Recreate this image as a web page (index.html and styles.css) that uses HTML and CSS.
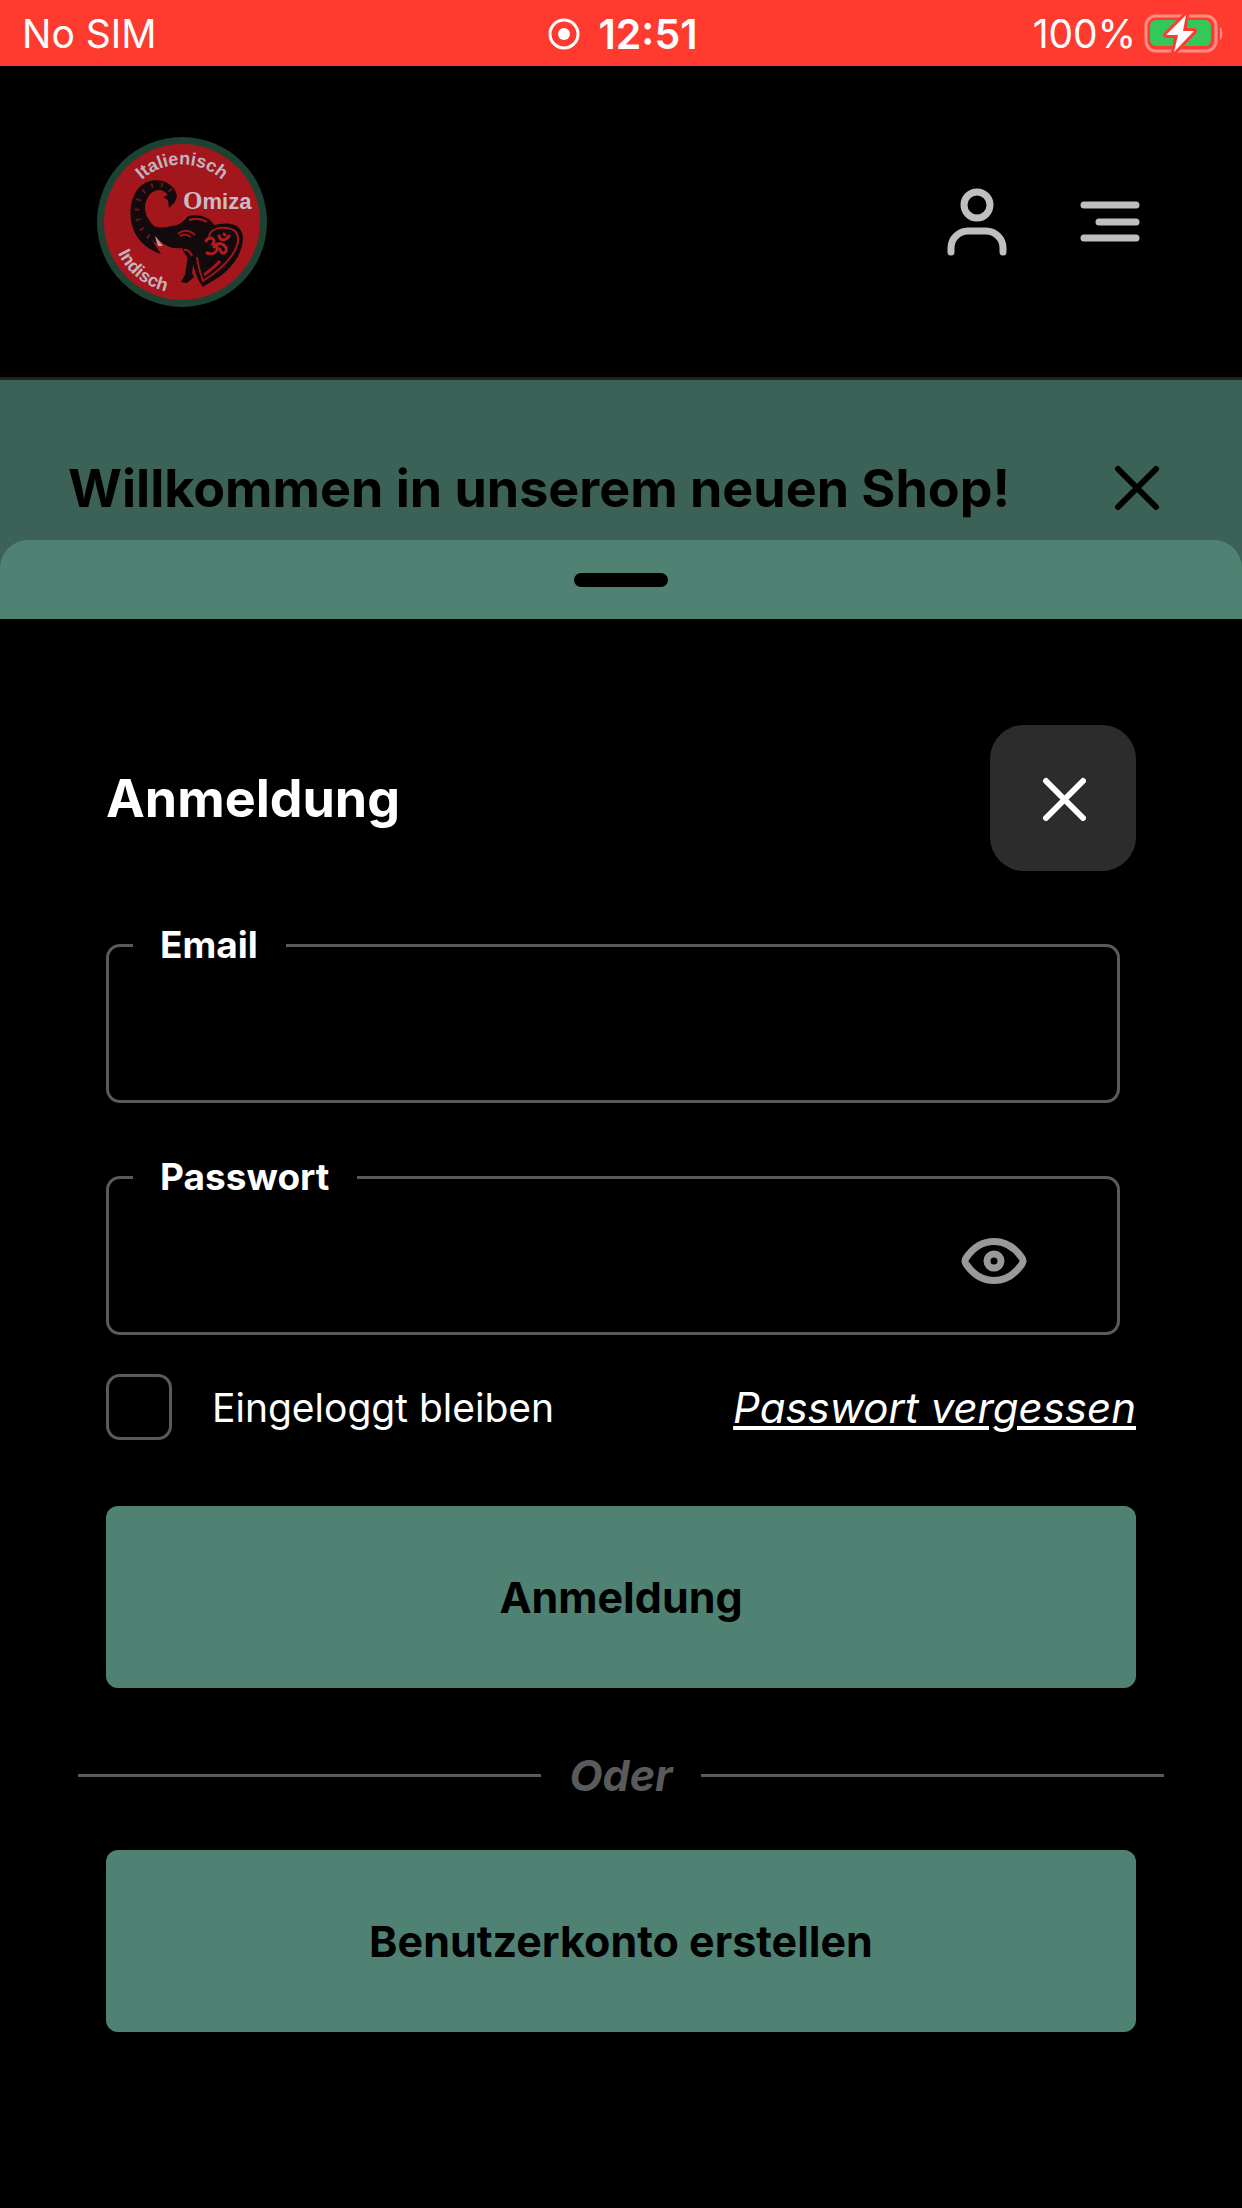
FILE: index.html
```html
<!DOCTYPE html>
<html lang="de">
<head>
    <meta charset="UTF-8" />
    <meta name="viewport" content="width=device-width, initial-scale=1.0"/>
    <title>Omiza - Anmeldung</title>
    <link rel="stylesheet" href="styles.css">
</head>
<body>
    <div class="status-bar">
        <span class="carrier">No SIM</span>
        <div class="clock">
            <svg width="32" height="32" viewBox="0 0 32 32">
                <circle cx="16" cy="16" r="14" fill="none" stroke="#fff" stroke-width="3"/>
                <circle cx="16" cy="16" r="6" fill="#fff"/>
            </svg>
            <span>12:51</span>
        </div>
        <div class="battery">
            <span>100%</span>
            <svg width="80" height="40" viewBox="0 0 80 40">
                <rect x="2" y="2" width="70" height="35" rx="10" fill="none" stroke="#ff8d86" stroke-width="3"/>
                <path d="M76 13 C79 15 79 24 76 26 Z" fill="#ff8d86"/>
                <rect x="6" y="6" width="61" height="26" rx="6" fill="#34c759"/>
                <path d="M42 1 L22 21 H34 L30 38 L50 17 H39 Z" fill="#fff" stroke="#ff3b30" stroke-width="6" stroke-linejoin="round" paint-order="stroke"/>
            </svg>
        </div>
    </div>

    <header class="header">
        <a href="#" class="logo" aria-label="Omiza">
            <svg width="170" height="170" viewBox="0 0 170 170">
                <defs>
                    <path id="arcTop" d="M29 66 A60 60 0 0 1 141 66"/>
                    <path id="arcBottom" d="M15 99 A71 71 0 0 0 87 156"/>
                </defs>
                <circle cx="85" cy="85" r="85" fill="#1d4232"/>
                <circle cx="85" cy="85" r="78" fill="#a3161c"/>
                <text class="logo-arc" fill="#c3b3bd"><textPath href="#arcTop" startOffset="50%" text-anchor="middle">Italienisch</textPath></text>
                <text class="logo-arc" fill="#c3b3bd"><textPath href="#arcBottom" startOffset="50%" text-anchor="middle">Indisch</textPath></text>
                <text class="logo-name" x="86" y="72" fill="#c9bcc8"><tspan class="logo-initial">O</tspan>miza</text>
                <!-- trunk and head -->
                <path d="M80 59 C78 46 62 40 50 45 C33 52 30 78 37 94 C42 106 54 114 64 117 C61 112 58 108 55 103 C64 111 74 113 85 111 C88 118 91 122 96 126 C98 136 101 143 106 150 C114 144 128 140 140 121 C147 108 148 97 142 91 C135 84 124 87 117 88 C112 79 100 77 91 79 C86 86 80 89 74 89 C68 91 62 91 57 89 C50 82 45 72 50 62 C54 53 64 49 71 58 L66 60 L71 63 L72 71 L78 65 Z" fill="#120a0c"/>
                <path d="M91 118 L97 122 L95 136 L97 140 L90 146 L84 145 L88 138 Z" fill="#120a0c"/>
                <path d="M74 54 C68 46 58 46 51 51 C40 58 38 72 42 86 C45 95 50 99 53 100" fill="none" stroke="#6b1419" stroke-width="5" stroke-dasharray="2 8"/>
                <path d="M58 99 C66 108 74 112 82 111 C80 119 68 120 61 113 Z" fill="#a3161c"/>
                <path d="M58 99 L61 109 L66 109 Z" fill="#b9a0a8"/>
                <path d="M81 97 Q89 90 98 98 M83 99 Q89 96 94 100 M92 83 Q102 80 110 85 M87 113 Q92 112 95 119" fill="none" stroke="#a3161c" stroke-width="2"/>
                <!-- ear -->
                <path d="M113 103 C108 90 130 88 138 94 C148 106 132 128 106 144 C104 138 101 130 100 120" fill="none" stroke="#a3161c" stroke-width="2"/>
                <path d="M107 138 C113 133 118 130 123 124" fill="none" stroke="#a3161c" stroke-width="3"/>
                <path d="M109 104 C112 99 120 101 116 107 C124 108 120 120 110 116 M117 110 C122 104 127 107 129 111 C131 116 124 119 123 112 M122 99 C123 104 129 104 132 99 M127 97 L128 98" fill="none" stroke="#b01c20" stroke-width="3" stroke-linecap="round"/>
            </svg>
        </a>
        <nav class="header-actions">
            <button type="button" class="icon-btn" aria-label="Konto">
                <svg width="60" height="68" viewBox="0 0 60 68" fill="none" stroke="#bfbfbf" stroke-width="7" stroke-linecap="round">
                    <circle cx="30" cy="17" r="13"/>
                    <path d="M4 64 V60 A17 17 0 0 1 21 43 H39 A17 17 0 0 1 56 60 V64"/>
                </svg>
            </button>
            <button type="button" class="icon-btn" aria-label="Menü">
                <svg width="60" height="68" viewBox="0 0 60 68" fill="none" stroke="#bfbfbf" stroke-width="7" stroke-linecap="round">
                    <path d="M4 17 H56 M19 34 H56 M4 50 H56"/>
                </svg>
            </button>
        </nav>
    </header>

    <div class="banner">
        <p>Willkommen in unserem neuen Shop!</p>
        <button type="button" class="icon-btn" aria-label="Hinweis schließen">
            <svg width="46" height="46" viewBox="0 0 46 46" fill="none" stroke="#000" stroke-width="6" stroke-linecap="round">
                <path d="M4 4 L42 42 M42 4 L4 42"/>
            </svg>
        </button>
    </div>

    <main class="sheet">
        <div class="sheet-handle"><span></span></div>
        <div class="sheet-content">
            <div class="sheet-title">
                <h1>Anmeldung</h1>
                <button type="button" class="close-btn" aria-label="Schließen">
                    <svg width="46" height="46" viewBox="0 0 46 46" fill="none" stroke="#fff" stroke-width="6" stroke-linecap="round">
                        <path d="M6 6 L43 43 M43 6 L6 43"/>
                    </svg>
                </button>
            </div>

            <form id="loginForm">
                <fieldset class="field">
                    <legend><label for="emailInput">Email</label></legend>
                    <input type="email" id="emailInput">
                </fieldset>
                <fieldset class="field">
                    <legend><label for="passwordInput">Passwort</label></legend>
                    <input type="password" id="passwordInput">
                    <button type="button" class="icon-btn" aria-label="Passwort anzeigen">
                        <svg width="66" height="48" viewBox="0 0 66 48" fill="none" stroke="#999" stroke-width="7" stroke-linejoin="round">
                            <path d="M5 21 C20 -1 46 -1 61 21 Q63 24 61 27 C46 49 20 49 5 27 Q3 24 5 21 Z"/>
                            <circle cx="33" cy="24" r="7"/>
                        </svg>
                    </button>
                </fieldset>

                <div class="options">
                    <input type="checkbox" id="stayInput">
                    <label for="stayInput">Eingeloggt bleiben</label>
                    <a href="#">Passwort vergessen</a>
                </div>

                <button type="submit" class="main-btn">Anmeldung</button>
                <div class="divider"><span>Oder</span></div>
                <button type="button" class="main-btn">Benutzerkonto erstellen</button>
            </form>
        </div>
    </main>
</body>
</html>
```

FILE: styles.css
```css
* {
    margin: 0;
    padding: 0;
    box-sizing: border-box;
}

body {
    font-family: Inter, 'Liberation Sans', sans-serif;
    min-height: 100vh;
    background: #000;
    color: #fff;
}

svg {
    display: block;
}

button {
    border: none;
    background: none;
    font-family: inherit;
    cursor: pointer;
}

/* Status bar */
.status-bar {
    display: grid;
    grid-template-columns: 1fr auto 1fr;
    align-items: center;
    height: 66px;
    padding: 0 18px 0 22px;
    background: #ff3b30;
    font-size: 39px;
    line-height: 68px;
}

.clock {
    display: flex;
    align-items: center;
    gap: 18px;
    font-size: 41px;
    font-weight: 600;
}

.battery {
    display: flex;
    justify-content: flex-end;
    align-items: center;
    gap: 8px;
}

/* Header */
.header {
    display: flex;
    justify-content: space-between;
    align-items: center;
    height: 314px;
    padding: 0 102px 0 97px;
    border-bottom: 3px solid #222;
}

.header-actions {
    display: flex;
    gap: 73px;
}

.logo-arc {
    font-family: 'Liberation Sans', sans-serif;
    font-size: 18px;
    font-weight: 700;
}

.logo-name {
    font-family: 'Liberation Sans', sans-serif;
    font-size: 22px;
    font-weight: 700;
}

.logo-initial {
    font-family: 'Liberation Serif', serif;
    font-size: 25px;
}

/* Banner */
.banner {
    display: flex;
    justify-content: space-between;
    align-items: center;
    height: 216px;
    padding: 0 82px 0 68px;
    background: #3c6156;
    color: #000;
    font-size: 52px;
    font-weight: 700;
}

/* Bottom sheet */
.sheet {
    position: relative;
    margin-top: -56px;
}

.sheet-handle {
    display: flex;
    justify-content: center;
    align-items: center;
    height: 79px;
    background: #4f8272;
    border-radius: 28px 28px 0 0;
}

.sheet-handle span {
    width: 94px;
    height: 14px;
    border-radius: 7px;
    background: #000;
}

.sheet-content {
    padding: 106px 106px 80px;
    background: #000;
}

.sheet-title {
    display: flex;
    justify-content: space-between;
    align-items: center;
    margin-bottom: 50px;
}

h1 {
    font-size: 52px;
    font-weight: 700;
}

.close-btn {
    display: flex;
    justify-content: center;
    align-items: center;
    width: 146px;
    height: 146px;
    border-radius: 34px;
    background: #2c2c2c;
}

/* Form */
.field {
    display: flex;
    align-items: center;
    height: 182px;
    margin: 0 16px 50px 0;
    padding: 0 90px 12px 24px;
    border: 3px solid #5a5a5a;
    border-radius: 14px;
}

.field legend {
    padding: 0 28px 0 27px;
    font-size: 37px;
    font-weight: 700;
    line-height: 48px;
}

.field input {
    flex: 1;
    min-width: 0;
    height: 120px;
    padding: 0 28px;
    border: none;
    outline: none;
    background: none;
    color: #fff;
    font-family: inherit;
    font-size: 42px;
}

.options {
    display: flex;
    align-items: center;
    margin: -11px 0 66px;
}

.options input {
    appearance: none;
    width: 66px;
    height: 66px;
    border: 3px solid #5a5a5a;
    border-radius: 14px;
}

.options input:checked {
    background: #4f8272;
}

.options label {
    margin-left: 40px;
    font-size: 39px;
}

.options a {
    margin-left: auto;
    color: #fff;
    font-size: 42px;
    font-style: italic;
}

.main-btn {
    display: block;
    width: 100%;
    height: 182px;
    border-radius: 12px;
    background: #4f8272;
    color: #000;
    font-size: 43px;
    font-weight: 700;
}

.divider {
    display: flex;
    align-items: center;
    gap: 28px;
    height: 162px;
    margin: 0 -28px;
    padding-top: 12px;
    color: #5a5a5a;
    font-size: 43px;
    font-style: italic;
    font-weight: 700;
}

.divider::before,
.divider::after {
    content: '';
    flex: 1;
    height: 3px;
    background: #5a5a5a;
}
```
